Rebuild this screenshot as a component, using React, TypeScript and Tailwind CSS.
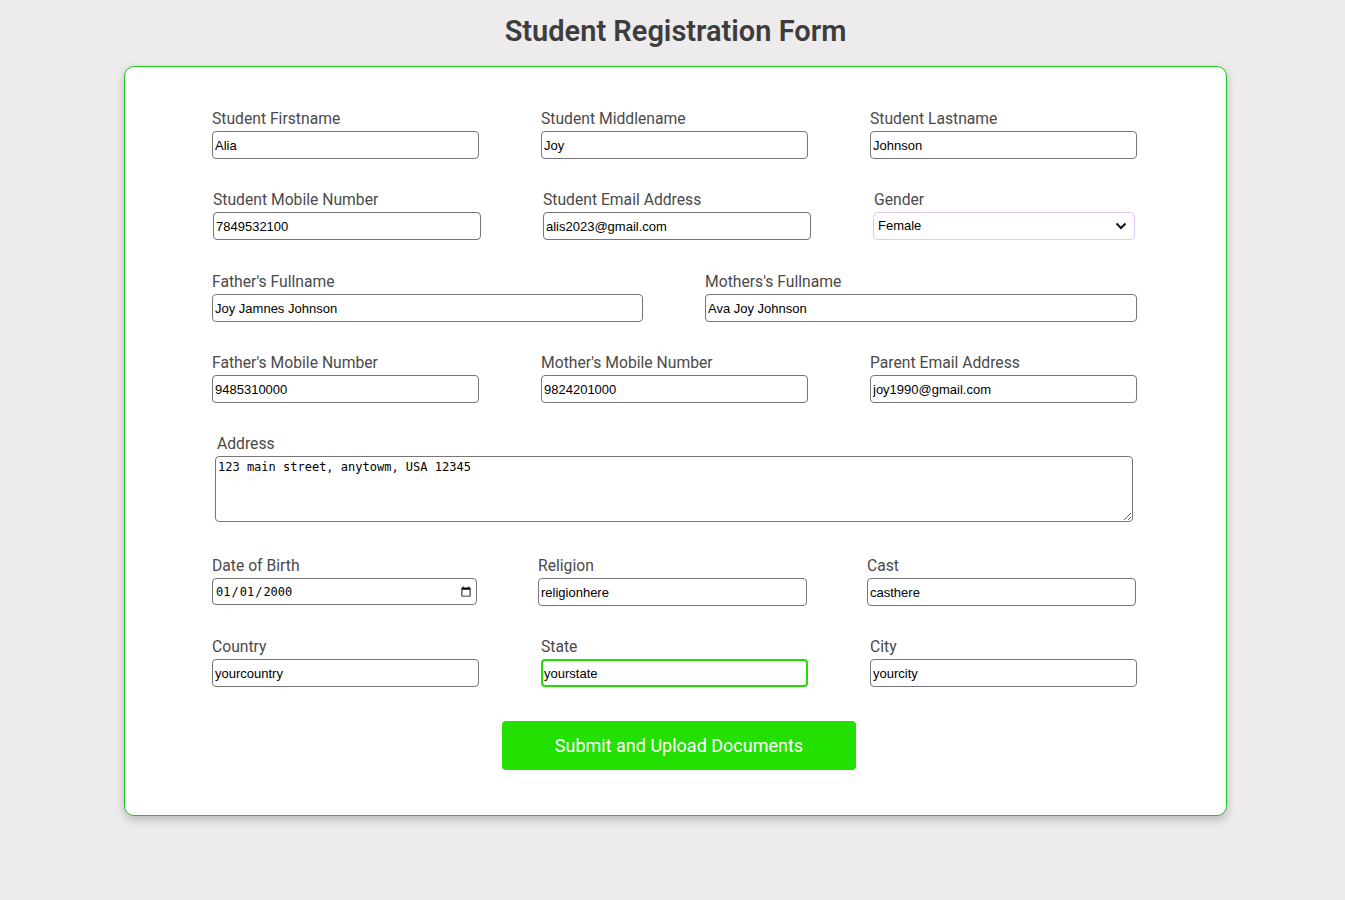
import { useState } from 'react';

const labelCls = "block text-[15.7px] leading-[19px] text-[#4a4a4a] mb-[3px] pt-[1px] -mt-[1px]";
const inputCls =
    "block h-[28px] w-full rounded-[4px] border border-[#767676] bg-white px-[2px] text-[13px] text-black outline-none [font-family:'Liberation_Sans',Arial,sans-serif]";

interface FieldProps {
    label: string;
    value: string;
    className?: string;
    inputClass?: string;
}

/**
 * 单个输入字段
 */
const Field = ({ label, value, className = '', inputClass = '' }: FieldProps) => {
    const [val, setVal] = useState(value);
    return (
        <div className={className}>
            <label className={labelCls}>{label}</label>
            <input
                type="text"
                value={val}
                onChange={(e) => setVal(e.target.value)}
                className={`${inputCls} ${inputClass}`}
            />
        </div>
    );
};

export default function App() {
    const [address, setAddress] = useState('123 main street, anytowm, USA 12345');
    const [gender, setGender] = useState('Female');
    const [dob, setDob] = useState('2000-01-01');

    return (
        <div className="min-h-[900px] bg-[#edebeb] pt-[13px] pl-[6px] [font-family:Roboto,'Noto_Sans',sans-serif]">
            {/* 标题 */}
            <h1 className="text-center text-[29px] leading-[36px] font-semibold text-[#3d3d3d] mb-[17px]">
                Student Registration Form
            </h1>

            {/* 表单卡片 */}
            <div className="mx-auto w-[1103px] rounded-[10px] border border-[#1ec81e] bg-white pt-[42px] pb-[45px] pl-[86px] pr-[89px] shadow-[0_4px_10px_rgba(0,0,0,0.22)]">
                <div className="w-[926px]">
                    {/* 第一行 */}
                    <div className="grid grid-cols-3 gap-x-[61px]">
                        <Field label="Student Firstname" value="Alia" className="pl-[1px]" />
                        <Field label="Student Middlename" value="Joy" className="pl-[1px]" />
                        <Field label="Student Lastname" value="Johnson" className="pl-[1px]" />
                    </div>

                    {/* 第二行 */}
                    <div className="mt-[31px] grid grid-cols-3 gap-x-[61px]">
                        <Field label="Student Mobile Number" value="7849532100" className="pl-[2px] -mr-[2px]" />
                        <Field label="Student Email Address" value="alis2023@gmail.com" className="pl-[3px] -mr-[3px]" />
                        <div className="pl-[4px] pr-[2px]">
                            <label className={`${labelCls} pl-[1px]`}>Gender</label>
                            <div className="relative">
                                <select
                                    value={gender}
                                    onChange={(e) => setGender(e.target.value)}
                                    className="block h-[28px] w-full appearance-none rounded-[4px] border border-[#e2c9f2] bg-white px-[4px] text-[13px] text-black outline-none [font-family:'Liberation_Sans',Arial,sans-serif]"
                                >
                                    <option>Female</option>
                                    <option>Male</option>
                                    <option>Other</option>
                                </select>
                                <svg
                                    className="pointer-events-none absolute right-[8px] top-[9px]"
                                    width="12"
                                    height="10"
                                    viewBox="0 0 12 10"
                                >
                                    <path d="M1.5 2.5 L6 7 L10.5 2.5" fill="none" stroke="#111" strokeWidth="2" />
                                </svg>
                            </div>
                        </div>
                    </div>

                    {/* 父母姓名 */}
                    <div className="mt-[32px] grid grid-cols-2 gap-x-[62px]">
                        <Field label="Father's Fullname" value="Joy Jamnes Johnson" className="pl-[1px]" />
                        <Field label="Mothers's Fullname" value="Ava Joy Johnson" />
                    </div>

                    {/* 父母联系方式 */}
                    <div className="mt-[31px] grid grid-cols-3 gap-x-[61px]">
                        <Field label="Father's Mobile Number" value="9485310000" className="pl-[1px]" />
                        <Field label="Mother's Mobile Number" value="9824201000" className="pl-[1px]" />
                        <Field label="Parent Email Address" value="joy1990@gmail.com" className="pl-[1px]" />
                    </div>

                    {/* 地址 */}
                    <div className="mt-[31px] pl-[4px] pr-[4px]">
                        <label className={`${labelCls} pl-[2px]`}>Address</label>
                        <textarea
                            value={address}
                            onChange={(e) => setAddress(e.target.value)}
                            className="block h-[66px] w-full rounded-[4px] border border-[#767676] bg-white px-[2px] pt-[3px] text-[12px] leading-[15px] text-black outline-none [font-family:'DejaVu_Sans_Mono',monospace]"
                        />
                    </div>

                    {/* 生日/宗教/种姓 */}
                    <div className="mt-[34px] grid grid-cols-3 gap-x-[61px]">
                        <div className="pl-[1px] pr-[2px]">
                            <label className={labelCls}>Date of Birth</label>
                            <input
                                type="date"
                                value={dob}
                                onChange={(e) => setDob(e.target.value)}
                                className="block h-[27px] w-full rounded-[4px] border border-[#767676] bg-white px-[2px] text-[12px] text-black outline-none [font-family:'DejaVu_Sans_Mono',monospace]"
                            />
                        </div>
                        <Field label="Religion" value="religionhere" className="-ml-[2px] mr-[1px]" inputClass="h-[27px]" />
                        <Field label="Cast" value="casthere" className="-ml-[2px] mr-[1px]" inputClass="h-[27px]" />
                    </div>

                    {/* 国家/州/城市 */}
                    <div className="mt-[31px] grid grid-cols-3 gap-x-[61px]">
                        <Field label="Country" value="yourcountry" className="pl-[1px]" />
                        <Field
                            label="State"
                            value="yourstate"
                            className="pl-[1px]"
                            inputClass="border-2! border-[#22dd00]! px-[1px]!"
                        />
                        <Field label="City" value="yourcity" className="pl-[1px]" />
                    </div>

                    {/* 提交按钮 */}
                    <div className="mt-[34px] flex justify-center pl-[10px]">
                        <button className="h-[49px] w-[354px] rounded-[4px] bg-[#22e000] text-[18px] text-white">
                            Submit and Upload Documents
                        </button>
                    </div>
                </div>
            </div>
        </div>
    );
}
